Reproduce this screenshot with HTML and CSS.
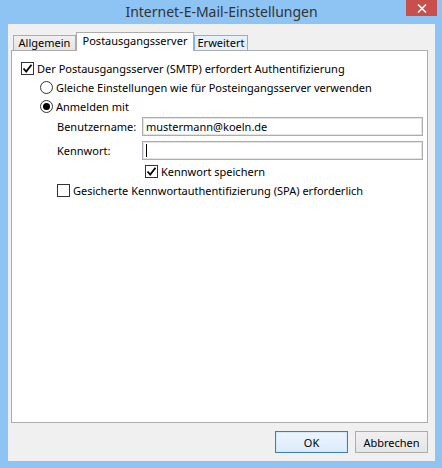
FILE: index.html
```html
<!DOCTYPE html>
<html lang="de">
<head>
    <meta charset="UTF-8">
    <title>Internet-E-Mail-Einstellungen</title>
    <link rel="stylesheet" href="styles.css">
</head>
<body>

    <div class="ventana">
        <div class="barratitulo">
            <span></span>
            <span class="titulo">Internet-E-Mail-Einstellungen</span>
            <span class="cerrar">
                <svg width="10" height="9" viewBox="0 0 10 9"><path d="M1 0.5 L9 8.5 M9 0.5 L1 8.5" stroke="#fff" stroke-width="1.6"/></svg>
            </span>
        </div>

        <div class="cliente">
            <div class="pestanas">
                <div class="pestana">Allgemein</div>
                <div class="pestana activa">Postausgangsserver</div>
                <div class="pestana hover">Erweitert</div>
            </div>

            <div class="panel">
                <label class="fila">
                    <span class="check marcado"><svg width="11" height="11" viewBox="0 0 11 11"><path d="M1.5 5.5 L4.2 8.5 L9.5 1.8" fill="none" stroke="#000" stroke-width="1.8"/></svg></span>
                    Der Postausgangsserver (SMTP) erfordert Authentifizierung
                </label>

                <div class="opciones">
                    <label class="fila">
                        <span class="radio"></span>
                        Gleiche Einstellungen wie für Posteingangsserver verwenden
                    </label>
                    <label class="fila">
                        <span class="radio marcado"><span class="punto"></span></span>
                        Anmelden mit
                    </label>

                    <div class="credenciales">
                        <div class="campo">
                            <span class="etiqueta">Benutzername:</span>
                            <div class="entrada">mustermann@koeln.de</div>
                        </div>
                        <div class="campo">
                            <span class="etiqueta">Kennwort:</span>
                            <div class="entrada"><span class="cursor"></span></div>
                        </div>
                        <label class="fila guardar">
                            <span class="check marcado"><svg width="11" height="11" viewBox="0 0 11 11"><path d="M1.5 5.5 L4.2 8.5 L9.5 1.8" fill="none" stroke="#000" stroke-width="1.8"/></svg></span>
                            Kennwort speichern
                        </label>
                        <label class="fila">
                            <span class="check"></span>
                            Gesicherte Kennwortauthentifizierung (SPA) erforderlich
                        </label>
                    </div>
                </div>
            </div>

            <div class="botones">
                <button class="boton predeterminado">OK</button>
                <button class="boton">Abbrechen</button>
            </div>
        </div>
    </div>

</body>
</html>
```

FILE: styles.css
```css
body {
    margin: 0;
    font-family: "Noto Sans", "DejaVu Sans", sans-serif;
    font-size: 11px;
    color: #000;
}

.ventana {
    width: 442px;
    height: 468px;
    background: #8ec4f3;
    display: flex;
    flex-direction: column;
    padding: 0 7px 7px 8px;
    box-sizing: border-box;
}

.barratitulo {
    height: 24px;
    display: grid;
    grid-template-columns: 1fr auto 1fr;
    align-items: start;
}

.barratitulo .titulo {
    font-size: 14px;
    color: #333;
    line-height: 22px;
    padding-top: 1px;
}

.barratitulo .cerrar {
    justify-self: end;
    width: 31px;
    height: 16px;
    background: #c7504c;
    display: flex;
    justify-content: center;
    align-items: center;
    margin-right: -2px;
}

.cliente {
    flex: 1;
    background: #f0f0f0;
    display: flex;
    flex-direction: column;
    padding: 8px 0 0 3px;
}

.pestanas {
    display: flex;
    align-items: flex-end;
    padding-left: 2px;
    height: 18px;
    position: relative;
    z-index: 1;
}

.pestana {
    height: 14px;
    line-height: 14px;
    border: 1px solid #acacac;
    border-bottom: none;
    background: linear-gradient(#f0f0f0, #e5e5e5);
    text-align: center;
    width: 61px;
}

.pestana + .pestana {
    border-left: none;
}

.pestana.activa {
    height: 18px;
    line-height: 15px;
    width: 116px;
    background: #fff;
    border-left: 1px solid #acacac;
    margin-bottom: -1px;
}

.pestana.hover {
    width: 52px;
    background: #e6f1fb;
    border: 1px solid #7eb4ea;
    border-bottom: none;
}

.pestana.activa + .pestana {
    border-left: 1px solid #7eb4ea;
}

.panel {
    width: 417px;
    height: 373px;
    box-sizing: border-box;
    background: #fff;
    border: 1px solid #acacac;
    padding: 8px 0 0 9px;
}

.fila {
    display: flex;
    align-items: center;
    gap: 3px;
    height: 19px;
}

.check {
    width: 11px;
    height: 11px;
    border: 1px solid #333;
    background: #fff;
    display: flex;
    justify-content: center;
    align-items: center;
}

.radio {
    width: 11px;
    height: 11px;
    border: 1px solid #333;
    border-radius: 50%;
    background: #fff;
    display: flex;
    justify-content: center;
    align-items: center;
}

.radio .punto {
    width: 7px;
    height: 7px;
    border-radius: 50%;
    background: #000;
}

.opciones {
    padding-left: 19px;
    display: flex;
    flex-direction: column;
}

.credenciales {
    padding-left: 17px;
    display: flex;
    flex-direction: column;
    gap: 3px;
}

.campo {
    display: flex;
    align-items: center;
    height: 21px;
}

.etiqueta {
    width: 85px;
}

.entrada {
    width: 276px;
    height: 17px;
    border: 1px solid #abadb3;
    box-shadow: inset 0 0 0 1px #e3e3e3;
    padding-left: 3px;
    line-height: 17px;
    display: flex;
    align-items: center;
}

.cursor {
    width: 1px;
    height: 13px;
    background: #000;
}

.guardar {
    padding-left: 88px;
    margin-top: -2px;
}

.credenciales .fila + .fila {
    margin-top: -3px;
}

.botones {
    display: flex;
    justify-content: flex-end;
    gap: 7px;
    padding: 8px 7px 0 0;
}

.boton {
    width: 73px;
    height: 22px;
    font-family: inherit;
    font-size: 11px;
    border: 1px solid #acacac;
    background: linear-gradient(#f0f0f0, #e5e5e5);
    padding: 0;
}

.boton.predeterminado {
    border-color: #3c7fb1;
    box-shadow: inset 0 0 0 1px #d4e8f8;
    background: linear-gradient(#ecf4fc, #dcecfc);
}
```
